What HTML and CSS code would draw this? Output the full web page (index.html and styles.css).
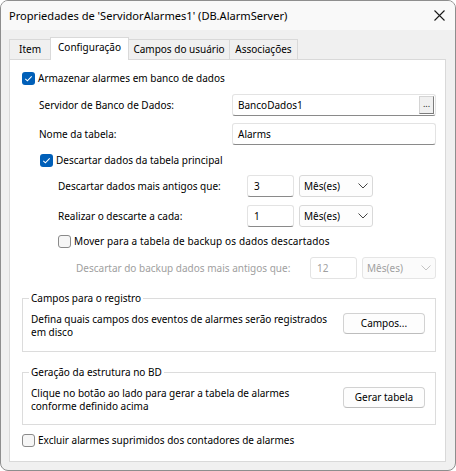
FILE: index.html
```html
<!DOCTYPE html>
<html lang="pt">
<head>
<meta charset="utf-8">
<title>Propriedades</title>
<link rel="stylesheet" href="styles.css">
</head>
<body>
<div class="window">
  <div class="titlebar">
    <span class="title">Propriedades de 'ServidorAlarmes1' (DB.AlarmServer)</span>
    <svg class="close" width="11" height="11" viewBox="0 0 11 11"><path d="M0.5 0.5L10.5 10.5M10.5 0.5L0.5 10.5" stroke="#1a1a1a" stroke-width="1.1" fill="none"/></svg>
  </div>
  <div class="body">
    <div class="tabs">
      <div class="tab t-item">Item</div>
      <div class="tab active t-conf">Configuração</div>
      <div class="tab t-campos">Campos do usuário</div>
      <div class="tab t-assoc">Associações</div>
    </div>
    <div class="panel">
      <div class="cbrow">
        <span class="box checked"><svg width="13" height="13" viewBox="0 0 13 13"><path d="M3.3 6.8L5.4 8.8L9.7 4.4" stroke="#fff" stroke-width="1.1" fill="none"/></svg></span>
        <span>Armazenar alarmes em banco de dados</span>
      </div>
      <div class="frow r-b">
        <span class="lbl l-b">Servidor de Banco de Dados:</span>
        <div class="input wide"><span>BancoDados1</span><span class="dots">...</span></div>
      </div>
      <div class="frow r-c">
        <span class="lbl l-b">Nome da tabela:</span>
        <div class="input wide"><span>Alarms</span></div>
      </div>
      <div class="cbrow r-d ind1">
        <span class="box checked"><svg width="13" height="13" viewBox="0 0 13 13"><path d="M3.3 6.8L5.4 8.8L9.7 4.4" stroke="#fff" stroke-width="1.1" fill="none"/></svg></span>
        <span>Descartar dados da tabela principal</span>
      </div>
      <div class="frow r-e">
        <span class="lbl l-e">Descartar dados mais antigos que:</span>
        <div class="input num"><span>3</span></div>
        <div class="select"><span>Mês(es)</span><svg class="chev" width="10" height="6" viewBox="0 0 10 6"><path d="M0.5 0.5L5 5L9.5 0.5" stroke="#444" stroke-width="1" fill="none"/></svg></div>
      </div>
      <div class="frow r-f">
        <span class="lbl l-e">Realizar o descarte a cada:</span>
        <div class="input num"><span>1</span></div>
        <div class="select"><span>Mês(es)</span><svg class="chev" width="10" height="6" viewBox="0 0 10 6"><path d="M0.5 0.5L5 5L9.5 0.5" stroke="#444" stroke-width="1" fill="none"/></svg></div>
      </div>
      <div class="cbrow r-g ind2">
        <span class="box"></span>
        <span class="wider">Mover para a tabela de backup os dados descartados</span>
      </div>
      <div class="frow r-h disabled">
        <span class="lbl l-h">Descartar do backup dados mais antigos que:</span>
        <div class="input num dis"><span>12</span></div>
        <div class="select dis wide2"><span>Mês(es)</span><svg class="chev" width="10" height="6" viewBox="0 0 10 6"><path d="M0.5 0.5L5 5L9.5 0.5" stroke="#c4c4c4" stroke-width="1" fill="none"/></svg></div>
      </div>
      <fieldset class="group g1">
        <legend>Campos para o registro</legend>
        <div class="grow">
          <div class="gtext">Defina quais campos dos eventos de alarmes serão registrados<br>em disco</div>
          <div class="btn">Campos...</div>
        </div>
      </fieldset>
      <fieldset class="group g2">
        <legend>Geração da estrutura no BD</legend>
        <div class="grow">
          <div class="gtext">Clique no botão ao lado para gerar a tabela de alarmes<br>conforme definido acima</div>
          <div class="btn">Gerar tabela</div>
        </div>
      </fieldset>
      <div class="cbrow r-last">
        <span class="box"></span>
        <span>Excluir alarmes suprimidos dos contadores de alarmes</span>
      </div>
    </div>
  </div>
</div>
</body>
</html>
```

FILE: styles.css
```css
* { box-sizing: border-box; }

body {
  margin: 0;
  background: #ffffff;
  font-family: "Noto Sans", "Open Sans", sans-serif;
  font-size: 10px;
  color: #000;
}

.window {
  width: 456px;
  height: 471px;
  border: 1px solid #8e8e8e;
  border-radius: 8px;
  background: #f0f0f0;
  overflow: hidden;
  display: flex;
  flex-direction: column;
}

.titlebar {
  height: 29px;
  flex: none;
  background: #f9f9f9;
  display: flex;
  align-items: center;
  padding-left: 8px;
}

.title {
  flex: 1;
  font-size: 11.1px;
  line-height: 16px;
  white-space: nowrap;
}

.close {
  margin-right: 10px;
}

.body {
  flex: 1;
  display: flex;
  flex-direction: column;
  padding: 7px 9px 8px 8px;
}

.tabs {
  height: 22px;
  flex: none;
  display: flex;
  align-items: flex-end;
  position: relative;
  z-index: 1;
}

.tab {
  height: 20px;
  border: 1px solid #d9d9d9;
  border-bottom: none;
  margin-right: -1px;
  text-align: center;
  line-height: 19px;
  white-space: nowrap;
  background: #f0f0f0;
}

.tab.active {
  height: 23px;
  margin-bottom: -1px;
  background: #ffffff;
  line-height: 18px;
  position: relative;
  z-index: 2;
}

.t-item { width: 42px; }
.t-conf { width: 79px; }
.t-campos { width: 102px; }
.t-assoc { width: 69px; }

.panel {
  flex: 1;
  background: #ffffff;
  border: 1px solid #d9d9d9;
  padding: 11px 9px 0 12px;
  display: flex;
  flex-direction: column;
}

.cbrow {
  height: 14px;
  display: flex;
  align-items: center;
  line-height: 14px;
  white-space: nowrap;
}

.wider { letter-spacing: 0.12px; }

.ind1 { padding-left: 18px; }
.ind2 { padding-left: 36px; }

.box {
  width: 13px;
  height: 13px;
  flex: none;
  margin-right: 3px;
  border-radius: 3px;
  border: 1px solid #8a8a8a;
  background: #f6f6f6;
  display: flex;
}

.box.checked {
  border: none;
  background: #005fb8;
}

.frow {
  height: 22px;
  display: flex;
  align-items: center;
  line-height: 16px;
  white-space: nowrap;
}

.lbl { flex: none; }
.l-b { width: 210px; padding-left: 17px; }
.l-e { width: 225px; padding-left: 36px; }
.l-h { width: 288px; padding-left: 54px; }

.r-b { margin-top: 9px; }
.r-c { margin-top: 7px; }
.r-d { margin-top: 8px; }
.r-e { margin-top: 8px; }
.r-f { margin-top: 8px; }
.r-g { margin-top: 7px; }
.r-h { margin-top: 9px; }

.disabled { color: #a0a0a0; }

.input {
  height: 22px;
  border: 1px solid #e3e3e3;
  border-bottom-color: #8a8a8a;
  border-radius: 3px;
  background: #ffffff;
  display: flex;
  align-items: center;
  padding-left: 5px;
}

.input.wide { width: 204px; }
.input.num { width: 47px; padding-left: 6px; }
.input.dis { border-color: #e3e3e3; color: #a0a0a0; }

.dots {
  margin-left: auto;
  margin-right: 1px;
  width: 15px;
  height: 18px;
  border: 1px solid;
  border-color: #d4d4d4 #7c7c7c #7c7c7c #d4d4d4;
  background: #f0f0f0;
  font-size: 9px;
  line-height: 13px;
  text-align: center;
  color: #222;
}

.select {
  width: 74px;
  height: 22px;
  margin-left: 5px;
  border: 1px solid #d9d9d9;
  border-radius: 3px;
  background: #fdfdfd;
  display: flex;
  align-items: center;
  padding-left: 4px;
}

.select span { flex: 1; }
.select .chev { margin-right: 4px; }
.select.dis { border-color: #e5e5e5; background: #fbfbfb; color: #a0a0a0; }

.group {
  margin: 0;
  min-width: 0;
  border: 1px solid #dcdcdc;
  padding: 7px 10px 12px 8px;
}

.group legend {
  padding: 0 2px;
  margin-left: -2px;
  line-height: 16px;
}

.g1 { margin-top: 11px; }
.g2 { margin-top: 12px; padding-bottom: 11px; }

.grow {
  display: flex;
  align-items: flex-start;
}

.gtext {
  flex: 1;
  line-height: 13px;
  white-space: nowrap;
}

.btn {
  flex: none;
  width: 82px;
  height: 21px;
  border: 1px solid #d2d2d2;
  border-bottom-color: #bdbdbd;
  border-radius: 4px;
  background: #fdfdfd;
  text-align: center;
  line-height: 19px;
}

.r-last { margin-top: 8px; }
```
